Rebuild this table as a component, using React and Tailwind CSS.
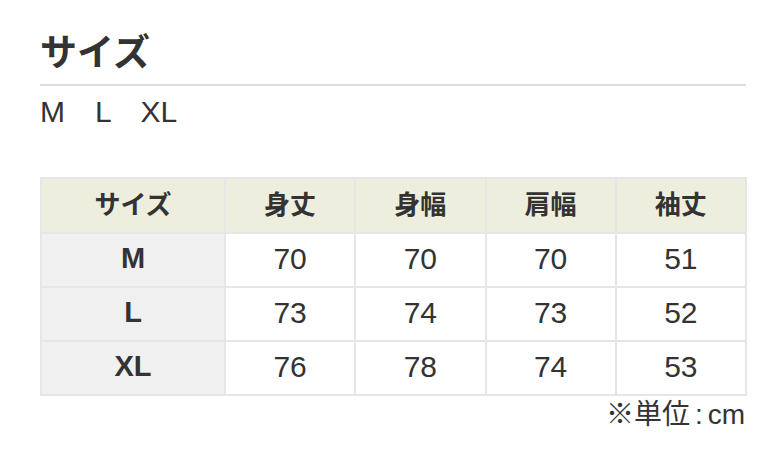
import React from "react";

const headers = ["サイズ", "身丈", "身幅", "肩幅", "袖丈"];

const rows = [
  { size: "M", values: ["70", "70", "70", "51"] },
  { size: "L", values: ["73", "74", "73", "52"] },
  { size: "XL", values: ["76", "78", "74", "53"] },
];

const App = () => {
  return (
    <div
      className="min-h-[472px] bg-white text-[#333]"
      style={{ fontFamily: '"Liberation Sans", "Noto Sans CJK JP", sans-serif' }}
    >
      <div className="ml-[40px] w-[707px] pt-[36px]">
        <h2 className="text-[37px] font-bold leading-[36px]">サイズ</h2>
        <div className="mt-[12px] h-[2px] w-[706px] bg-[#dddddd]" />
        <p className="mt-[12px] text-[30px] leading-[28px]">M　L　XL</p>

        <div className="mt-[51px] grid grid-cols-[182px_1fr_1fr_1fr_1fr] gap-[2px] bg-[#e6e6e6] p-[2px]">
          {headers.map((h) => (
            <div
              key={h}
              className="flex h-[53px] items-center justify-center bg-[#eeeedf] text-[26px] font-bold"
            >
              {h}
            </div>
          ))}
          {rows.map((row) => (
            <React.Fragment key={row.size}>
              <div className="flex h-[52px] items-center justify-center bg-[#f0f0f0] pb-[3px] text-[29px] font-bold">
                {row.size}
              </div>
              {row.values.map((v, i) => (
                <div
                  key={i}
                  className="flex h-[52px] items-center justify-center bg-white pb-[4px] text-[30px]"
                >
                  {v}
                </div>
              ))}
            </React.Fragment>
          ))}
        </div>

        <p className="mt-[4px] pr-[2px] text-right text-[28px] leading-[30px]">
          ※単位<span className="px-[5px]">:</span>cm
        </p>
      </div>
    </div>
  );
};

export default App;
